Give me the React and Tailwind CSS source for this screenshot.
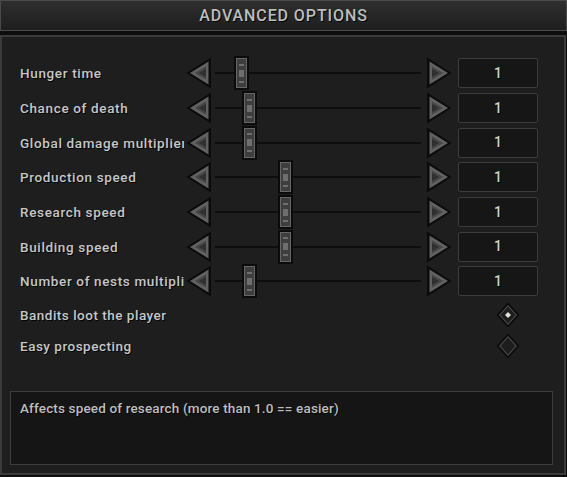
const SLIDERS = [
  { label: 'Hunger time', thumb: 22 },
  { label: 'Chance of death', thumb: 30 },
  { label: 'Global damage multiplier', thumb: 30 },
  { label: 'Production speed', thumb: 66 },
  { label: 'Research speed', thumb: 66 },
  { label: 'Building speed', thumb: 66 },
  { label: 'Number of nests multiplier', thumb: 30 },
]

const TOGGLES = [
  { label: 'Bandits loot the player', on: true },
  { label: 'Easy prospecting', on: false },
]

const shadow = '[text-shadow:1px_1px_0_#050505]'

function Arrow({ dir }) {
  const flip = dir === 'right' ? 'scale(-1,1) translate(-26,0)' : undefined
  return (
    <svg width="26" height="32" viewBox="0 0 26 32" className="shrink-0">
      <g transform={flip}>
        <polygon points="0.5,16 25,0.5 25,31.5" fill="#0b0b0b" />
        <polygon points="4,16 22.5,4.5 22.5,27.5" fill="#616161" />
        <polygon points="9,16 20,9.5 20,22.5" fill="#454545" />
        <polygon points="13,16 20,12 20,20" fill="#2f2f2f" />
      </g>
    </svg>
  )
}

function Thumb({ left }) {
  return (
    <div
      className="absolute top-[-1px] w-[15px] h-[34px] bg-[#0b0b0b] p-[2px]"
      style={{ left }}
    >
      <div className="w-full h-full bg-[#3e3e3e] border border-[#666] flex flex-col items-center justify-center gap-[4px]">
        <div className="w-[5px] h-[2px] bg-[#6e6e6e]" />
        <div className="w-[5px] h-[7px] bg-[#6e6e6e]" />
        <div className="w-[5px] h-[2px] bg-[#6e6e6e]" />
      </div>
    </div>
  )
}

function Diamond({ on }) {
  return (
    <svg width="24" height="26" viewBox="0 0 24 26">
      <polygon points="12,0.5 23.5,13 12,25.5 0.5,13" fill="#0b0b0b" />
      <polygon points="12,3 21,13 12,23 3,13" fill="#4c4c4c" />
      <polygon points="12,4.5 19.5,13 12,21.5 4.5,13" fill="#1d1d1d" />
      {on && <polygon points="12,10 15,13 12,16 9,13" fill="#e2e2d8" />}
    </svg>
  )
}

export default function App() {
  return (
    <div className="w-[567px] h-[477px] bg-[#0d0d0d] overflow-hidden font-['Roboto',sans-serif]">
      <div className="h-[31px] border border-[#4a4a4a] bg-gradient-to-b from-[#2e2e2e] to-[#1f1f1f] flex items-center justify-center">
        <span className={`text-[16px] font-medium text-[#bcbcbc] tracking-[0.9px] ${shadow}`}>
          ADVANCED OPTIONS
        </span>
      </div>

      <div className="mt-[4px] w-[566px] h-[440px] border-2 border-[#3b3b3b] bg-[#1e1e1e] pt-[19px] px-[18px] flex flex-col">
        {SLIDERS.map(s => (
          <div key={s.label} className="h-[34.7px] flex items-center">
            <div className={`w-[164px] overflow-hidden whitespace-nowrap text-[13.5px] font-medium tracking-[0.65px] text-[#c6c6c6] ${shadow}`}>
              {s.label}
            </div>
            <div className="ml-[2px]">
              <Arrow dir="left" />
            </div>
            <div className="relative w-[214px] h-[32px]">
              <div className="absolute left-[3px] right-[5px] top-[15px] h-[2px] bg-[#0e0e0e]" />
              <Thumb left={s.thumb} />
            </div>
            <Arrow dir="right" />
            <div className="ml-[6px] w-[80px] h-[30px] rounded-[2px] border border-[#3c3c3c] bg-[#161616] flex items-center justify-center">
              <span className={`text-[14px] font-medium text-[#d0d0d0] ${shadow}`}>1</span>
            </div>
          </div>
        ))}

        <div className="mt-[1px] flex flex-col">
          {TOGGLES.map(t => (
            <div key={t.label} className="h-[31px] flex items-center justify-between">
              <span className={`text-[13.5px] font-medium tracking-[0.5px] text-[#c6c6c6] ${shadow}`}>{t.label}</span>
              <div className="mr-[26px]">
                <Diamond on={t.on} />
              </div>
            </div>
          ))}
        </div>

        <div className="mt-[29px] -ml-[10px] w-[543px] h-[74px] border border-[#3c3c3c] bg-[#151515] px-[9px] pt-[4px]">
          <span className={`text-[13.5px] font-medium tracking-[0.15px] text-[#bdbdbd] ${shadow}`}>
            Affects speed of research (more than 1.0 == easier)
          </span>
        </div>
      </div>
    </div>
  )
}
